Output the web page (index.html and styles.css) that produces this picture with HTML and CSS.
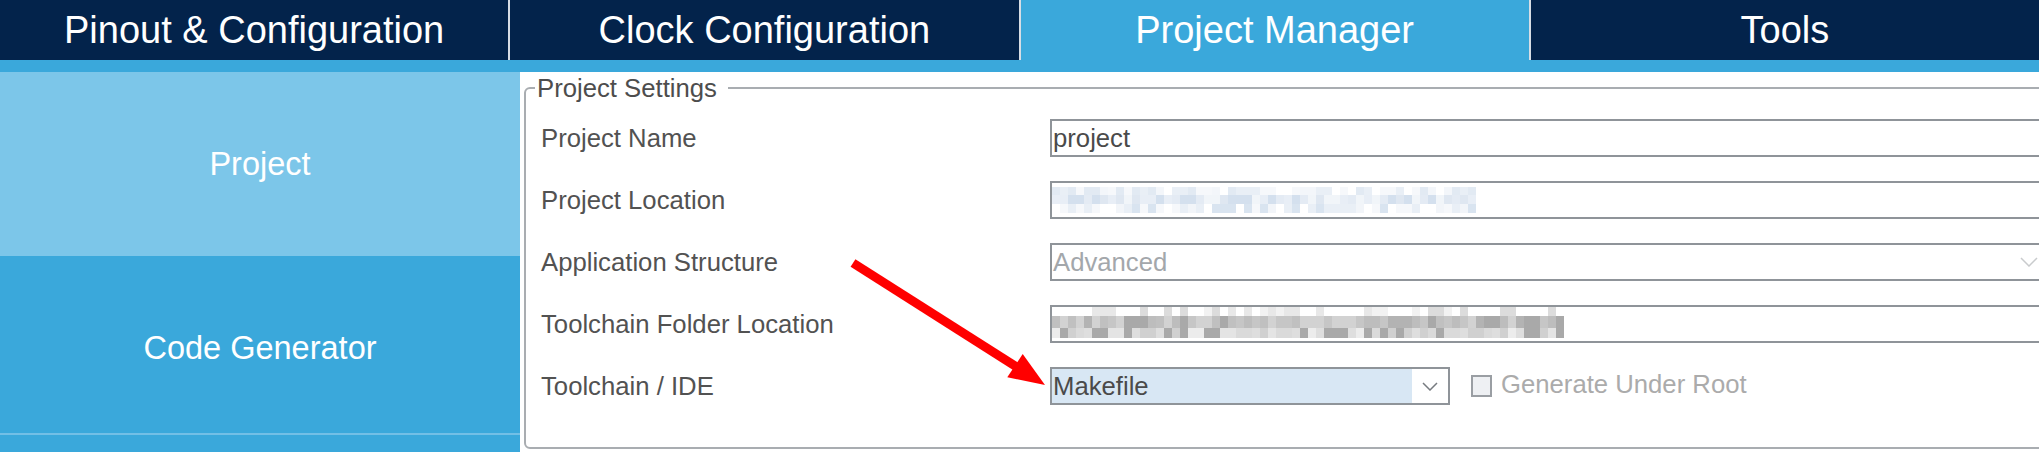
FILE: index.html
```html
<!DOCTYPE html>
<html lang="en">
<head>
<meta charset="utf-8">
<title>Project Manager</title>
<link rel="stylesheet" href="styles.css">
</head>
<body>
<div class="app">
  <nav class="tabs">
    <div class="tab">Pinout &amp; Configuration</div>
    <div class="tab">Clock Configuration</div>
    <div class="tab active">Project Manager</div>
    <div class="tab">Tools</div>
  </nav>
  <div class="strip"></div>
  <div class="body">
    <aside class="sidebar">
      <div class="side-item selected">Project</div>
      <div class="side-item gen">Code Generator</div>
      <div class="side-item rest"></div>
    </aside>
    <main class="content">
      <fieldset class="settings">
        <legend>Project Settings</legend>
        <div class="row">
          <span class="label">Project Name</span>
          <div class="field"><span class="value">project</span></div>
        </div>
        <div class="row">
          <span class="label">Project Location</span>
          <div class="field"><canvas id="mosaic-loc" class="mosaic loc" width="424" height="26"></canvas></div>
        </div>
        <div class="row">
          <span class="label">Application Structure</span>
          <div class="field disabled">
            <span class="value">Advanced</span>
            <span class="chev light"><svg width="18" height="10" viewBox="0 0 18 10"><polyline points="1,1 9,9 17,1" fill="none" stroke="#c9cbcd" stroke-width="1.5"/></svg></span>
          </div>
        </div>
        <div class="row">
          <span class="label">Toolchain Folder Location</span>
          <div class="field"><canvas id="mosaic-tool" class="mosaic tool" width="516" height="31"></canvas></div>
        </div>
        <div class="row">
          <span class="label">Toolchain / IDE</span>
          <div class="field combo">
            <span class="value">Makefile</span>
            <span class="chev"><svg width="16" height="9" viewBox="0 0 16 9"><polyline points="1,1 8,8 15,1" fill="none" stroke="#777b80" stroke-width="1.5"/></svg></span>
          </div>
          <span class="checkbox"></span>
          <span class="check-label">Generate Under Root</span>
        </div>
      </fieldset>
    </main>
  </div>
  <svg class="arrow" width="2039" height="452" viewBox="0 0 2039 452">
    <line x1="853" y1="263" x2="1019" y2="368.5" stroke="#ff0000" stroke-width="9"/>
    <polygon points="1045,385 1022.7,354 1007.3,377.3" fill="#ff0000"/>
  </svg>
</div>
<script src="script.js"></script>
</body>
</html>
```

FILE: styles.css
```css
html, body {
  margin: 0;
  padding: 0;
  width: 2039px;
  height: 452px;
  overflow: hidden;
  background: #ffffff;
}

body {
  font-family: "Liberation Sans", Arial, sans-serif;
}

.app {
  position: relative;
  width: 2039px;
  height: 452px;
}

.tabs {
  display: flex;
  height: 60px;
  background: #03234b;
}

.tab {
  flex: 1;
  color: #ffffff;
  font-size: 38px;
  line-height: 60px;
  text-align: center;
  white-space: nowrap;
}

.tab + .tab {
  border-left: 2px solid #d7dde5;
}

.tab.active {
  background: #3aa8db;
}

.strip {
  height: 12px;
  background: #3aa8db;
}

.body {
  display: flex;
  height: 380px;
}

.sidebar {
  width: 520px;
  flex: none;
  background: #3aa8db;
  display: flex;
  flex-direction: column;
}

.side-item {
  display: flex;
  align-items: center;
  justify-content: center;
  color: #ffffff;
  font-size: 32.5px;
}

.side-item.selected {
  height: 184px;
  background: #7cc6e9;
}

.side-item.gen {
  height: 169px;
  padding-top: 8px;
  border-bottom: 2px solid #72bfe6;
}

.side-item.rest {
  flex: 1;
}

.content {
  flex: 1;
  min-width: 0;
  background: #ffffff;
}

.settings {
  box-sizing: border-box;
  width: 1580px;
  margin: 2px 0 0 4px;
  padding: 5px 0 30px 15px;
  border: 2px solid #a9adb1;
  border-radius: 6px;
}

.settings legend {
  margin-left: -6px;
  padding: 0 11px 0 2px;
  font-size: 25.7px;
  line-height: 28px;
  color: #4d4d4d;
}

.row {
  display: flex;
  align-items: center;
  height: 62px;
}

.label {
  width: 509px;
  flex: none;
  font-size: 25.7px;
  color: #525252;
  white-space: nowrap;
}

.field {
  box-sizing: border-box;
  width: 1000px;
  height: 38px;
  flex: none;
  border: 2px solid #8f9499;
  background: #ffffff;
  display: flex;
  align-items: center;
  font-size: 25.7px;
  color: #4a4a4a;
}

.value {
  padding-left: 1px;
  white-space: nowrap;
}

.field.disabled .value {
  color: #a3a7ab;
}

.chev {
  margin-left: auto;
  width: 36px;
  height: 100%;
  display: flex;
  align-items: center;
  justify-content: center;
  background: #ffffff;
}

.chev.light {
  width: 38px;
}

.field.combo {
  width: 400px;
  background: #d8e7f4;
}

.mosaic {
  display: block;
  align-self: flex-start;
}

.mosaic.loc {
  margin-top: 4px;
}

.mosaic.tool {
  margin-top: 0;
}

.checkbox {
  box-sizing: border-box;
  width: 21px;
  height: 22px;
  margin-left: 21px;
  border: 2px solid #9a9ea3;
  background: #eef0f3;
}

.check-label {
  margin-left: 9px;
  font-size: 25.7px;
  color: #ababab;
  white-space: nowrap;
  position: relative;
  top: -2px;
}

.arrow {
  position: absolute;
  left: 0;
  top: 0;
  pointer-events: none;
}
```

FILE: script.js
```js
(function () {
  var seed = 12345;
  function rnd() {
    seed = (seed * 1103515245 + 12345) % 2147483648;
    return seed / 2147483648;
  }
  function pick(arr) {
    return arr[Math.floor(rnd() * arr.length)];
  }
  function mosaic(id, cols, rows) {
    var c = document.getElementById(id);
    if (!c) return;
    var ctx = c.getContext('2d');
    var y = 0;
    rows.forEach(function (r) {
      for (var i = 0; i < cols; i++) {
        ctx.fillStyle = pick(r.colors);
        ctx.fillRect(i * 8, y, 8, r.h);
      }
      y += r.h;
    });
  }
  mosaic('mosaic-loc', 53, [
    { h: 8, colors: ['#f3f6fa', '#e9eff6', '#ffffff', '#e2eaf3', '#f6f8fb'] },
    { h: 9, colors: ['#dfe7f1', '#e8eef6', '#d4e0ee', '#f1f5f9', '#e4ebf4'] },
    { h: 9, colors: ['#f2f5f9', '#e9eff6', '#ffffff', '#d9e4f0', '#f6f8fb'] }
  ]);
  mosaic('mosaic-tool', 64, [
    { h: 9, colors: ['#ffffff', '#ffffff', '#ffffff', '#f2f2f2', '#e8e8e8', '#dcdcdc'] },
    { h: 12, colors: ['#bdbdbd', '#c6c6c6', '#b3b3b3', '#a9a9a9', '#d2d2d2', '#c0c0c0'] },
    { h: 10, colors: ['#dadada', '#e4e4e4', '#d0d0d0', '#ececec', '#a9a9a9', '#dedede'] }
  ]);
})();
```
